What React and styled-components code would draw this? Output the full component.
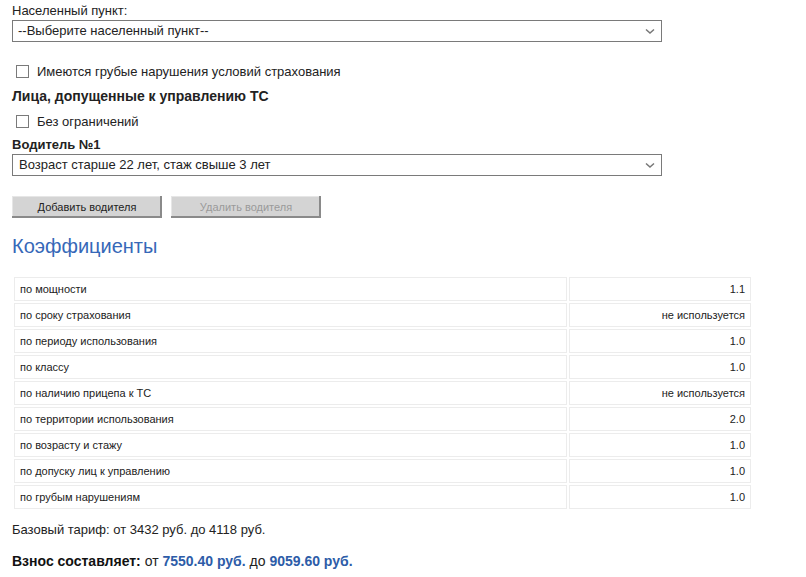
import React from 'react';
import styled, { createGlobalStyle } from 'styled-components';

const GlobalStyle = createGlobalStyle`
    body {
        margin: 0;
        background: #fff;
        font-family: "Liberation Sans", Arial, sans-serif;
        color: #222;
    }
`;

const Page = styled.div`
    padding: 3px 12px 0 12px;
    width: 650px;
`;

const FieldLabel = styled.div`
    font-size: 13px;
    line-height: 16px;
`;

const SelectBox = styled.div`
    position: relative;
    margin-top: ${p => p.$top || 0}px;
    width: 650px;
    height: 22px;
    box-sizing: border-box;
    border: 1px solid #7a7a7a;
    background: #fff;
    font-size: 13px;
    line-height: 20px;
    padding-left: ${p => p.$pad || 5}px;
    color: #222;
`;

const Chevron = styled.svg`
    position: absolute;
    right: 6px;
    top: 7px;
`;

const CheckRow = styled.label`
    display: flex;
    align-items: center;
    gap: 8px;
    height: 20px;
    padding-left: 4px;
    margin-top: ${p => p.$top || 0}px;
    font-size: 13px;
`;

const Box = styled.span`
    width: 13px;
    height: 13px;
    box-sizing: border-box;
    border: 1px solid #7a7a7a;
    background: #fff;
`;

const Heading = styled.div`
    font-size: ${p => p.$size || 14}px;
    font-weight: bold;
    line-height: 17px;
    margin-top: ${p => p.$top || 0}px;
`;

const ButtonRow = styled.div`
    display: flex;
    gap: 9px;
    margin-top: 20px;
`;

const Button = styled.button`
    width: 150px;
    height: 22px;
    border: none;
    background: #d4d4d4;
    box-shadow: inset -2px -2px 0 #8a8a8a, inset 1px 1px 0 #e6e6e6;
    font-family: "Liberation Sans", Arial, sans-serif;
    font-size: 11px;
    color: ${p => (p.disabled ? '#9a9a9a' : '#222')};
    padding: 0 0 1px 0;
`;

const Title = styled.h2`
    margin: 16px 0 0 0;
    font-size: 20px;
    font-weight: normal;
    line-height: 24px;
    color: #3668b8;
`;

const Table = styled.table`
    margin-top: 17px;
    width: 741px;
    border-spacing: 2px;
    font-size: 11px;
`;

const Cell = styled.td`
    height: 22px;
    padding: 0 5px;
    border: 1px solid #ececec;
    text-align: ${p => (p.$right ? 'right' : 'left')};
    width: ${p => (p.$right ? '170px' : 'auto')};
`;

const Line = styled.div`
    font-size: ${p => p.$size || 13}px;
    line-height: 16px;
    margin-top: ${p => p.$top || 0}px;
`;

const Strong = styled.b`
    color: ${p => (p.$blue ? '#2d5ca8' : '#111')};
`;

const coefficients = [
    ['по мощности', '1.1'],
    ['по сроку страхования', 'не используется'],
    ['по периоду использования', '1.0'],
    ['по классу', '1.0'],
    ['по наличию прицепа к ТС', 'не используется'],
    ['по территории использования', '2.0'],
    ['по возрасту и стажу', '1.0'],
    ['по допуску лиц к управлению', '1.0'],
    ['по грубым нарушениям', '1.0'],
];

function Select({ children, top, pad }) {
    return (
        <SelectBox $top={top} $pad={pad}>
            {children}
            <Chevron width="10" height="7" viewBox="0 0 10 7">
                <path d="M1 1.5 L5 5 L9 1.5" fill="none" stroke="#777" strokeWidth="1.5" />
            </Chevron>
        </SelectBox>
    );
}

export default function App() {
    return (
        <Page>
            <GlobalStyle />
            <FieldLabel>Населенный пункт:</FieldLabel>
            <Select top={1} pad={5}>--Выберите населенный пункт--</Select>

            <CheckRow $top={19}>
                <Box />
                Имеются грубые нарушения условий страхования
            </CheckRow>

            <Heading $top={7}>Лица, допущенные к управлению ТС</Heading>

            <CheckRow $top={6}>
                <Box />
                Без ограничений
            </CheckRow>

            <Heading $top={5} $size={13}>Водитель №1</Heading>
            <Select top={1} pad={6}>Возраст старше 22 лет, стаж свыше 3 лет</Select>

            <ButtonRow>
                <Button>Добавить водителя</Button>
                <Button disabled>Удалить водителя</Button>
            </ButtonRow>

            <Title>Коэффициенты</Title>

            <Table>
                <tbody>
                    {coefficients.map(([name, value]) => (
                        <tr key={name}>
                            <Cell>{name}</Cell>
                            <Cell $right>{value}</Cell>
                        </tr>
                    ))}
                </tbody>
            </Table>

            <Line $top={11}>Базовый тариф: от 3432 руб. до 4118 руб.</Line>
            <Line $top={15} $size={14}>
                <Strong>Взнос составляет:</Strong> от <Strong $blue>7550.40 руб.</Strong> до{' '}
                <Strong $blue>9059.60 руб.</Strong>
            </Line>
        </Page>
    );
}
